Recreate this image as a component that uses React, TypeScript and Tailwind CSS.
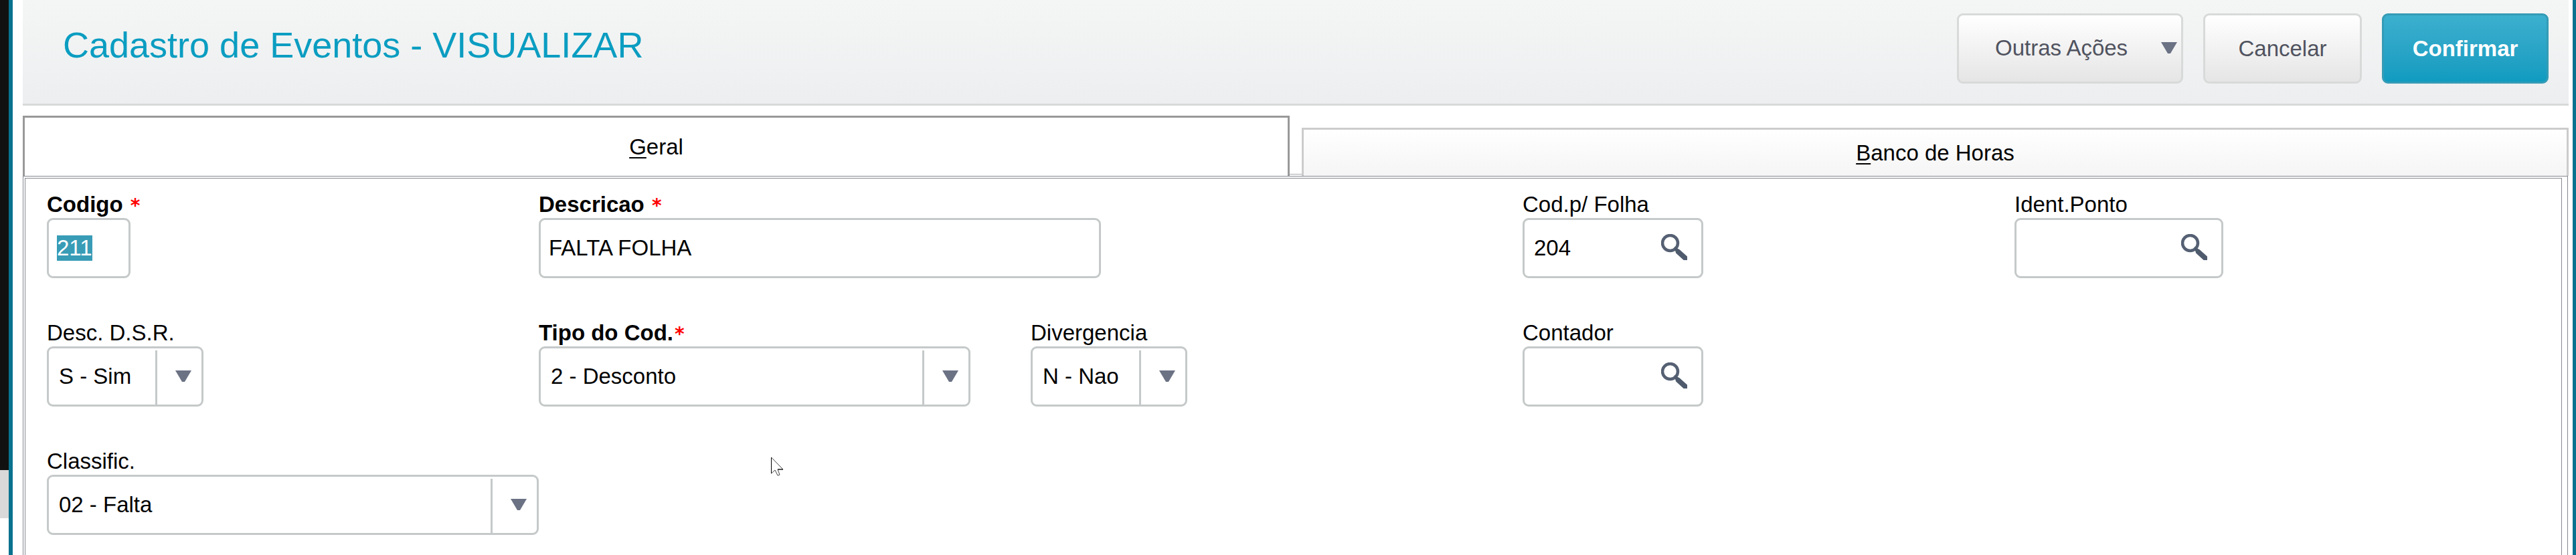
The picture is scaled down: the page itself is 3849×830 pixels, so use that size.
import { useEffect, useRef } from "react"
import type { ReactNode } from "react"

function Arrow() {
    return (
        <svg viewBox="0 0 24 18" className="w-6 h-[18px] shrink-0" aria-hidden="true">
            <path d="M0 0H24L14 17H10Z" fill="#6b7284" />
        </svg>
    )
}

function Lupa() {
    return (
        <svg viewBox="0 0 39 39" className="size-[39px]" aria-hidden="true">
            <circle cx="13.5" cy="13.5" r="11.5" fill="none" stroke="#556073" strokeWidth="4.5" />
            <path d="M21 21L27 24L38 34V38H34L23 28Z" fill="#4f5b6d" stroke="#4f5b6d" strokeWidth="2" />
        </svg>
    )
}

type FieldProps = {
    id: string
    label: string
    required?: boolean
    className?: string
    children: ReactNode
}

function Field({ id, label, required, className = "", children }: FieldProps) {
    return (
        <div className={className}>
            <label htmlFor={id} className={`block h-10 leading-10 whitespace-pre ${required ? "font-bold" : ""}`}>
                {label}
                {required && <span className="pl-0.5 font-['DejaVu_Sans',sans-serif] text-[28px] leading-none text-[#ff0000]">*</span>}
            </label>
            {children}
        </div>
    )
}

function SelectBox({ id, value, width }: { id: string; value: string; width: string }) {
    return (
        <div className={`relative h-[90px] border-3 border-[#c5c9c9] rounded-[9px] bg-white ${width}`}>
            <select id={id} defaultValue={value} className="appearance-none w-full h-full pl-[15px] pr-20 outline-none">
                <option>{value}</option>
            </select>
            <div className="absolute right-0 top-[3px] bottom-0 w-[69px] border-l-3 border-[#c5c9c9] flex justify-end pt-[30px] pr-[15px] pointer-events-none">
                <Arrow />
            </div>
        </div>
    )
}

function SearchBox({ id, label, value, width }: { id: string; label: string; value?: string; width: string }) {
    return (
        <div className={`flex items-center h-[90px] border-3 border-[#c5c9c9] rounded-[9px] bg-white pl-3.5 pr-[21px] ${width}`}>
            <input id={id} defaultValue={value} className="min-w-0 flex-1 h-full outline-none" />
            <button type="button" aria-label={`Pesquisar ${label}`} className="pb-1">
                <Lupa />
            </button>
        </div>
    )
}

function App() {
    const codigo = useRef<HTMLInputElement>(null)

    useEffect(() => {
        codigo.current?.focus()
        codigo.current?.select()
    }, [])

    return (
        <div className="relative flex min-h-screen bg-white text-black text-[33px] font-['Liberation_Sans',Arial,sans-serif]">
            {/* Janela de trás */}
            <div className="w-[13px] shrink-0">
                <div className="h-[703px] bg-[#111111]" />
                <div className="h-[72px] bg-[#d9d9d9]" />
            </div>

            <main className="flex-1 min-w-0 flex flex-col border-l-6 border-r-5 border-[#08728f] pl-[15px] pr-1.5">
                <header className="flex justify-between h-[158px] border-b-3 border-[#d8d9d9] bg-linear-to-b from-[#f4f6f5] to-[#edeef0] pl-[60px] pr-[30px]">
                    <h1 className="text-[54px] leading-[60px] pt-[37px] text-[#0b9dc1]">Cadastro de Eventos - VISUALIZAR</h1>
                    <div className="flex gap-[30px] pt-5 text-[#50535f]">
                        <button type="button" className="flex items-center justify-between w-[338px] h-[105px] pl-[54px] pr-1.5 pb-0.5 border-3 border-[#d8d9d9] rounded-[9px] bg-linear-to-b from-white to-[#e5e5e5]">
                            Outras Ações
                            <Arrow />
                        </button>
                        <button type="button" className="w-[237px] h-[105px] border-3 border-[#d8d9d9] rounded-[9px] bg-linear-to-b from-white to-[#e5e5e5]">
                            Cancelar
                        </button>
                        <button type="button" className="w-[249px] h-[105px] border-3 border-[#349cb6] rounded-[9px] bg-linear-to-b from-[#3cafce] to-[#0f9bc0] text-white font-bold">
                            Confirmar
                        </button>
                    </div>
                </header>

                <div role="tablist" className="flex items-end mt-[15px]">
                    <button type="button" role="tab" aria-selected="true" className="flex-1 h-[90px] border-3 border-b-0 border-[#999999] bg-white">
                        <span className="underline decoration-2 underline-offset-4">G</span>eral
                    </button>
                    <div className="w-[18px] h-0.5 mb-px border-t border-[#aaaaaa]" />
                    <button type="button" role="tab" aria-selected="false" className="flex-1 h-[72px] border-3 border-b-0 border-[#cccccc] bg-linear-to-b from-white to-[#f5f5f5]">
                        <span className="underline decoration-2 underline-offset-4">B</span>anco de Horas
                    </button>
                </div>

                <div className="flex-1 flex flex-col border border-b-0 border-[#85888f] pt-0.5 pl-0.5 pr-2 mr-px">
                    <form className="flex-1 grid grid-cols-5 content-start gap-y-[62px] border border-b-0 border-[#85888f] pt-[19px] pl-8 pr-[82px] pb-[30px]">
                        <Field id="codigo" label="Codigo " required>
                            <input
                                ref={codigo}
                                id="codigo"
                                defaultValue="211"
                                className="block w-[125px] h-[90px] px-3 border-3 border-[#c5c9c9] rounded-[9px] outline-none selection:bg-[#389cb6] selection:text-white"
                            />
                        </Field>
                        <Field id="descricao" label="Descricao " required className="col-span-2">
                            <input
                                id="descricao"
                                defaultValue="FALTA FOLHA"
                                className="block w-[840px] h-[90px] px-3 border-3 border-[#c5c9c9] rounded-[9px] outline-none"
                            />
                        </Field>
                        <Field id="folha" label="Cod.p/ Folha">
                            <SearchBox id="folha" label="Cod.p/ Folha" value="204" width="w-[270px]" />
                        </Field>
                        <Field id="ponto" label="Ident.Ponto">
                            <SearchBox id="ponto" label="Ident.Ponto" width="w-[312px]" />
                        </Field>

                        <Field id="dsr" label="Desc. D.S.R.">
                            <SelectBox id="dsr" value="S - Sim" width="w-[234px]" />
                        </Field>
                        <Field id="tipo" label="Tipo do Cod." required>
                            <SelectBox id="tipo" value="2 - Desconto" width="w-[645px]" />
                        </Field>
                        <Field id="divergencia" label="Divergencia">
                            <SelectBox id="divergencia" value="N - Nao" width="w-[234px]" />
                        </Field>
                        <Field id="contador" label="Contador" className="col-span-2">
                            <SearchBox id="contador" label="Contador" width="w-[270px]" />
                        </Field>

                        <Field id="classific" label="Classific.">
                            <SelectBox id="classific" value="02 - Falta" width="w-full" />
                        </Field>
                    </form>
                </div>
            </main>

            {/* Cursor do mouse */}
            <svg viewBox="0 0 20 30" className="absolute left-[1152px] top-[683px] w-5 h-[30px]" aria-hidden="true">
                <path d="M0.5 1V25L6 20L10 28L13 27L10 19H18Z" fill="#fff" stroke="#444" />
                <path d="M0.5 1V25M10 19H18" stroke="#000" />
            </svg>
        </div>
    )
}

export default App
